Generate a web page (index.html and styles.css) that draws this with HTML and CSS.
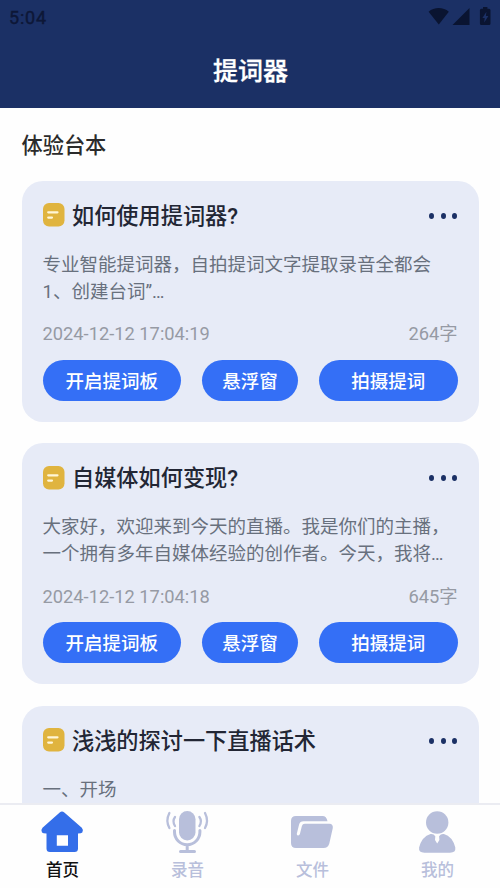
FILE: index.html
```
<!DOCTYPE html>
<html lang="zh-CN">
<head>
<meta charset="utf-8">
<title>提词器</title>
<link rel="stylesheet" href="styles.css">
</head>
<body>
<div class="screen">
  <header class="header">
    <div class="status">
      <span class="clock">5:04</span>
      <svg class="status-icons" width="64" height="20" viewBox="0 0 64 20">
        <path d="M.6 4.7C6-.1 15.4-.1 20.8 4.7L10.8 17.6z"/>
        <path d="M24.5 18L41.5 1V18z"/>
        <path fill-rule="evenodd" transform="translate(1.200 0)" d="M52.200 1.800h1.600V0h4.400v1.800h1.600q1.500 0 1.500 1.500V16.500q0 1.500-1.500 1.500h-7.600q-1.500 0-1.500-1.500V3.300q0-1.500 1.500-1.500zM57.200 4.800L53.200 11h2.300L55 15.500 59.200 9h-2.500z"/>
      </svg>
    </div>
    <h1 class="page-title">提词器</h1>
  </header>

  <main class="content">
    <h2 class="section-title">体验台本</h2>

    <article class="card">
      <div class="card-head">
        <svg class="note" width="22" height="24" viewBox="0 0 22 24"><rect width="21.5" height="23.5" rx="6"/><path d="M5.200 9.300H14.500M5.200 14.600H9"/></svg>
        <h3 class="card-title">如何使用提词器?</h3>
        <div class="more"><i></i><i></i><i></i></div>
      </div>
      <p class="excerpt">专业智能提词器，自拍提词文字提取录音全都会<br>1、创建台词”…</p>
      <div class="meta"><span>2024-12-12 17:04:19</span><span>264字</span></div>
      <div class="actions"><button class="wide">开启提词板</button><button>悬浮窗</button><button class="wide">拍摄提词</button></div>
    </article>

    <article class="card">
      <div class="card-head">
        <svg class="note" width="22" height="24" viewBox="0 0 22 24"><rect width="21.5" height="23.5" rx="6"/><path d="M5.200 9.300H14.500M5.200 14.600H9"/></svg>
        <h3 class="card-title">自媒体如何变现?</h3>
        <div class="more"><i></i><i></i><i></i></div>
      </div>
      <p class="excerpt">大家好，欢迎来到今天的直播。我是你们的主播，<br>一个拥有多年自媒体经验的创作者。今天，我将…</p>
      <div class="meta"><span>2024-12-12 17:04:18</span><span>645字</span></div>
      <div class="actions"><button class="wide">开启提词板</button><button>悬浮窗</button><button class="wide">拍摄提词</button></div>
    </article>

    <article class="card">
      <div class="card-head">
        <svg class="note" width="22" height="24" viewBox="0 0 22 24"><rect width="21.5" height="23.5" rx="6"/><path d="M5.200 9.300H14.500M5.200 14.600H9"/></svg>
        <h3 class="card-title">浅浅的探讨一下直播话术</h3>
        <div class="more"><i></i><i></i><i></i></div>
      </div>
      <p class="excerpt">一、开场</p>
    </article>
  </main>

  <nav class="tabs">
    <a class="tab active">
      <svg width="42" height="42" viewBox="0 0 42 42"><path fill-rule="evenodd" d="M18.700 1.500q2.300-1.800 4.600 0L40.800 16.800q2 2.200.5 4.700-.8 1.100-4.300 1.100V37.500q0 3.500-3.500 3.500H9q-3.500 0-3.500-3.500V22.600q-3.700 0-4.500-1.100-1.500-2.500.5-4.700zM15.800 24.200V34.800H27V24.200z"/></svg>
      <span>首页</span>
    </a>
    <a class="tab">
      <svg width="42" height="42" viewBox="0 0 42 42"><rect x="13" y="0" width="16.500" height="29.500" rx="8.250"/><path class="line" d="M8.500 19.500v1.500a12.700 12.700 0 0 0 25.400 0v-1.500M21.200 34v6M14.500 40.500H28.500"/><path class="line thin" d="M3.400 2Q-.6 9.700 3.400 17M9 6Q6 10.200 9 15M39 2Q43 9.700 39 17M33.400 6Q36.400 10.200 33.400 15"/></svg>
      <span>录音</span>
    </a>
    <a class="tab">
      <svg width="42" height="42" viewBox="0 0 42 42"><path d="M5 5H31.500Q35.500 5 36.500 10.200H12.500Q9 10.200 8.100 13.500L5.800 22.800Q5.600 24.300 7 24.400 8.400 24.500 8.900 23L10.900 15Q11.500 12.800 13.800 12.800H38.500Q42.200 13 41.800 17L38.300 32.500Q37 37 32.500 37H5Q0 37 0 32V10Q0 5 5 5z"/></svg>
      <span>文件</span>
    </a>
    <a class="tab">
      <svg width="42" height="42" viewBox="0 0 42 42"><circle cx="21.200" cy="11.500" r="11.200"/><path d="M14.500 23Q17.500 22.500 19.300 25.200L19 29 21.200 32.500 23.400 29 23.100 25.200Q24.900 22.500 27.900 23 36.500 25.500 39.300 36.500 40 41.700 34 41.700H8.400Q2.400 41.700 3.100 36.500 5.900 25.500 14.500 23z"/></svg>
      <span>我的</span>
    </a>
  </nav>
</div>
</body>
</html>
```
FILE: styles.css
```
* { box-sizing: border-box; }
body {
  margin: 0;
  font-family: Roboto, "Noto Sans CJK SC", sans-serif;
}
h1, h2, h3, p { margin: 0; font-weight: 500; }
.screen {
  display: flex;
  flex-direction: column;
  height: 888px;
  overflow: hidden;
  background: #fefefe;
}
.header {
  flex: none;
  height: 108px;
  background: #1b3065;
  color: #fff;
}
.status {
  display: flex;
  justify-content: space-between;
  height: 35px;
  padding: 7px 8px 0 9px;
  color: #0d1737;
}
.clock { font-size: 18px; line-height: 21px; font-weight: 400; letter-spacing: .8px; -webkit-text-stroke: .4px #0d1737; }
.status-icons { fill: #0a1431; }
.page-title {
  text-align: center;
  font-size: 25px;
  line-height: 36px;
  padding: 19px 0 0 1px;
  -webkit-text-stroke: .3px #fff;
}
.content {
  flex: 1;
  min-height: 0;
  overflow: hidden;
  padding: 0 21.5px;
}
.section-title {
  height: 72.500px;
  padding-top: 22px;
  font-size: 21.200px;
  line-height: 31px;
  color: #2b2b2b;
}
.card {
  height: 241px;
  margin-bottom: 21.700px;
  padding: 19px 21px 0;
  border-radius: 21px;
  background: #e7ebf7;
}
.card-head {
  display: flex;
  align-items: center;
  height: 32px;
}
.note { flex: none; fill: #e0b43f; margin: -1px 7.500px 0 0; }
.note path { stroke: #fff6d8; stroke-width: 2.200; fill: none; stroke-linecap: round; }
.card-title { flex: 1; font-size: 22.200px; line-height: 32px; color: #222634; }
.more { display: flex; gap: 6.500px; margin-right: .5px; }
.more i { width: 5px; height: 6px; border-radius: 50%; background: #1b3065; }
.excerpt {
  margin-top: 20px;
  font-size: 18.500px;
  line-height: 27px;
  font-weight: 400;
  color: #68707d;
  white-space: nowrap;
}
.meta {
  display: flex;
  justify-content: space-between;
  margin-top: 14.500px;
  font-size: 18.300px;
  line-height: 28px;
  color: #969aa4;
}
.actions { display: flex; gap: 21px; margin-top: 11.500px; }
.actions button {
  flex: 0 0 96px;
  height: 41px;
  padding: 3px 0 0;
  border: 0;
  border-radius: 20.500px;
  background: #346ff6;
  color: #fff;
  font: 500 18.500px/38px Roboto, "Noto Sans CJK SC", sans-serif;
}
.actions .wide { flex: 1; }
.tabs {
  flex: none;
  display: grid;
  grid-template-columns: repeat(4, 1fr);
  height: 85px;
  border-top: 2px solid #ebecf2;
  background: #fefefe;
}
.tab {
  display: flex;
  flex-direction: column;
  align-items: center;
  padding-top: 6px;
  font-size: 16.500px;
  line-height: 24px;
  color: #b8bfdb;
}
.tab svg { overflow: visible; fill: #b8bfdb; margin-left: -.5px; }
.tab span { margin-top: 6px; font-weight: 500; }
.tab.active { color: #111; }
.tab.active svg { fill: #346ee9; }
.tab .line { fill: none; stroke: #b8bfdb; stroke-width: 3; stroke-linecap: round; }
.tab .thin { stroke-width: 2.300; }
```
